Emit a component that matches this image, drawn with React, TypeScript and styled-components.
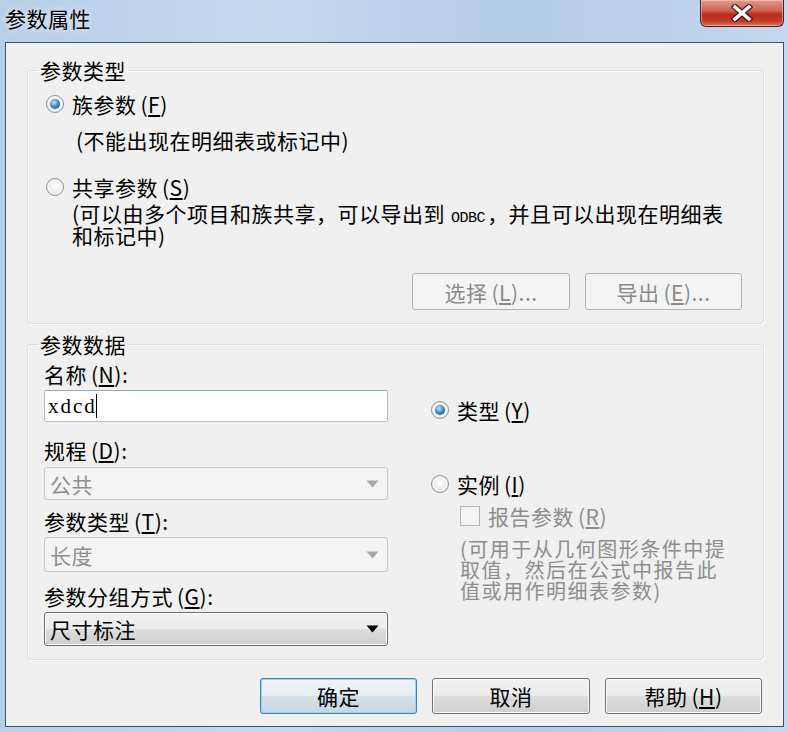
import React from "react";
import styled, { createGlobalStyle, css } from "styled-components";

const Global = createGlobalStyle`
  html, body { margin: 0; padding: 0; background: #b9d1ea; }
  body { font-family: "Noto Sans CJK SC", "Noto Sans", sans-serif; }
  * { box-sizing: border-box; }
`;

const Window = styled.div`
  width: 788px;
  height: 732px;
  display: flex;
  flex-direction: column;
  background: linear-gradient(90deg, #b8cfe8 0%, #c5d9ef 35%, #b2cbe6 65%, #c3d7ee 100%);
  font-family: "Noto Sans CJK SC", "Noto Sans", sans-serif;
  font-size: 21px;
  color: #000;
`;

const TitleBar = styled.div`
  height: 42px;
  flex: none;
  display: flex;
  justify-content: space-between;
  align-items: flex-start;
  padding-left: 5px;
`;

const TitleText = styled.div`
  font-size: 21px;
  line-height: 24px;
  margin-top: 6px;
  letter-spacing: 0.5px;
  text-shadow: 0 0 6px rgba(255, 255, 255, 0.9);
`;

const CloseButton = styled.div`
  width: 84px;
  height: 27px;
  margin-right: 4px;
  border: 1px solid #5a1a14;
  border-top: none;
  border-radius: 0 0 6px 6px;
  background: linear-gradient(180deg, #e39a8a 0%, #cf6552 40%, #b92d18 55%, #c13a24 80%, #d87259 100%);
  box-shadow: inset 0 0 0 1px rgba(255, 220, 210, 0.5);
  display: flex;
  align-items: center;
  justify-content: center;
`;

const Client = styled.div`
  flex: 1;
  margin: 0 4px 5px 5px;
  border: 1px solid #435164;
  background: #f0f0f0;
  padding: 15px 19px 0 21px;
  display: flex;
  flex-direction: column;
`;

const Group = styled.fieldset<{ $pad: string; $top?: number }>`
  margin: ${(p) => p.$top ?? 0}px 0 0 0;
  padding: ${(p) => p.$pad};
  border: 1px solid #d5dfe5;
  border-radius: 4px;
  box-shadow: inset 1px 1px 0 #ffffff, 1px 1px 0 #ffffff;
  min-width: 0;
`;

const Legend = styled.legend`
  font-size: 21px;
  line-height: 24px;
  padding: 0 2px;
  margin-left: -6px;
  letter-spacing: 0.5px;
`;

const RadioRow = styled.label<{ $top: number; $left?: number }>`
  display: flex;
  align-items: center;
  gap: 8px;
  margin-top: ${(p) => p.$top}px;
  margin-left: ${(p) => p.$left ?? 2}px;
  line-height: 24px;
  letter-spacing: 0.5px;
  white-space: nowrap;
`;

const RadioCircle = styled.span<{ $checked?: boolean }>`
  width: 18px;
  height: 18px;
  flex: none;
  border-radius: 50%;
  border: 1px solid #8e9193;
  background: radial-gradient(circle at 50% 40%, #ffffff 0%, #f0f0f0 45%, #cfd1d3 100%);
  box-shadow: inset 0 0 0 2px #f6f6f6;
  display: flex;
  align-items: center;
  justify-content: center;
  &::after {
    content: "";
    width: 10px;
    height: 10px;
    border-radius: 50%;
    background: radial-gradient(circle at 40% 35%, #c6ecff 0%, #4b9ad0 40%, #1d5585 80%, #133d63 100%);
    display: ${(p) => (p.$checked ? "block" : "none")};
  }
`;

const Note = styled.div<{ $top: number; $left: number; $lh?: number; $muted?: boolean; $size?: number; $ls?: number }>`
  margin-top: ${(p) => p.$top}px;
  margin-left: ${(p) => p.$left}px;
  line-height: ${(p) => p.$lh ?? 24}px;
  font-size: ${(p) => p.$size ?? 21}px;
  letter-spacing: ${(p) => p.$ls ?? 0.5}px;
  white-space: nowrap;
  color: ${(p) => (p.$muted ? "#8d8d8d" : "#000")};
`;

const Odbc = styled.span`
  font-family: "Liberation Mono", monospace;
  font-size: 15px;
  line-height: 0;
  letter-spacing: -0.5px;
  margin: 0 2px 0 6px;
`;

const Mn = styled.span`
  margin-left: 4px;
`;

const ButtonRow = styled.div<{ $top: number; $right?: number }>`
  display: flex;
  justify-content: flex-end;
  gap: 15px;
  margin-top: ${(p) => p.$top}px;
  margin-right: ${(p) => p.$right ?? 0}px;
`;

const Button = styled.div<{ $w: number; $h: number; $disabled?: boolean; $default?: boolean }>`
  width: ${(p) => p.$w}px;
  height: ${(p) => p.$h}px;
  border-radius: 3px;
  display: flex;
  align-items: center;
  justify-content: center;
  letter-spacing: 0.5px;
  white-space: nowrap;
  ${(p) =>
    p.$disabled
      ? css`
          border: 1px solid #adb2b5;
          background: #f4f4f4;
          color: #8a8a8a;
        `
      : css`
          border: 1px solid ${p.$default ? "#3c7fb1" : "#707070"};
          background: ${p.$default
            ? "linear-gradient(180deg, #eef4f8 0%, #e6eef4 49%, #d6e1ea 50%, #c9d6e1 100%)"
            : "linear-gradient(180deg, #f2f2f2 0%, #ebebeb 49%, #dddddd 50%, #cfcfcf 100%)"};
          box-shadow: inset 0 0 0 1px ${p.$default ? "#9ad6f6" : "#fbfbfb"};
          color: #000;
        `}
`;

const DataGrid = styled.div`
  display: grid;
  grid-template-columns: 344px 1fr;
  column-gap: 42px;
`;

const Column = styled.div`
  display: flex;
  flex-direction: column;
`;

const FieldLabel = styled.div<{ $top: number }>`
  margin-top: ${(p) => p.$top}px;
  line-height: 24px;
  letter-spacing: 0.5px;
  white-space: nowrap;
`;

const TextBox = styled.div`
  margin-top: 4px;
  height: 32px;
  border: 1px solid #a9bfd6;
  border-top-color: #8ea9c4;
  border-radius: 2px;
  background: #fff;
  display: flex;
  align-items: center;
  padding-left: 3px;
  font-family: "Liberation Serif", serif;
  font-size: 21px;
  letter-spacing: 2px;
`;

const Caret = styled.span`
  width: 1px;
  height: 24px;
  background: #000;
  margin-left: -1px;
`;

const Combo = styled.div<{ $disabled?: boolean; $h: number; $top: number }>`
  margin-top: ${(p) => p.$top}px;
  height: ${(p) => p.$h}px;
  border-radius: 3px;
  display: flex;
  align-items: center;
  justify-content: space-between;
  padding: 0 8px 0 5px;
  letter-spacing: 0.5px;
  ${(p) =>
    p.$disabled
      ? css`
          border: 1px solid #c8c8c8;
          background: #f4f4f4;
          color: #8f8f8f;
        `
      : css`
          border: 1px solid #707070;
          background: linear-gradient(180deg, #f2f2f2 0%, #ebebeb 49%, #dddddd 50%, #cfcfcf 100%);
          box-shadow: inset 0 0 0 1px #fbfbfb;
          color: #000;
        `}
`;

const CheckRow = styled.div`
  display: flex;
  align-items: center;
  gap: 8px;
  margin-top: 8px;
  margin-left: 30px;
  line-height: 24px;
  color: #8d8d8d;
  letter-spacing: 0.5px;
  white-space: nowrap;
`;

const CheckBox = styled.span`
  width: 20px;
  height: 20px;
  flex: none;
  border: 1px solid #b4b4b4;
  background: #f4f4f4;
`;

const Arrow = ({ disabled }: { disabled?: boolean }) => (
  <svg width="13" height="8" viewBox="0 0 13 8">
    <path d="M0.5 0.5 H12.5 L6.5 7.5 Z" fill={disabled ? "#a8a8a8" : "#000"} />
  </svg>
);

const CloseGlyph = () => (
  <svg width="22" height="18" viewBox="0 0 22 18">
    <path d="M4 3 L18 15 M18 3 L4 15" stroke="#4a1410" strokeWidth="6" strokeLinecap="square" />
    <path d="M4 3 L18 15 M18 3 L4 15" stroke="#ffffff" strokeWidth="3.6" strokeLinecap="square" />
  </svg>
);

const M = ({ k }: { k: string }) => (
  <Mn>
    (<u>{k}</u>)
  </Mn>
);

export default function App() {
  return (
    <>
      <Global />
      <Window>
        <TitleBar>
          <TitleText>参数属性</TitleText>
          <CloseButton>
            <CloseGlyph />
          </CloseButton>
        </TitleBar>
        <Client>
          <Group $pad="10px 21px 13px 16px">
            <Legend>参数类型</Legend>
            <RadioRow $top={0}>
              <RadioCircle $checked />
              <span>
                族参数<M k="F" />
              </span>
            </RadioRow>
            <Note $top={12} $left={32}>(不能出现在明细表或标记中)</Note>
            <RadioRow $top={23}>
              <RadioCircle />
              <span>
                共享参数<M k="S" />
              </span>
            </RadioRow>
            <Note $top={3} $left={28} $lh={22}>
              (可以由多个项目和族共享，可以导出到<Odbc>ODBC</Odbc>，并且可以出现在明细表
              <br />
              和标记中)
            </Note>
            <ButtonRow $top={27}>
              <Button $w={158} $h={37} $disabled>
                选择<M k="L" />...
              </Button>
              <Button $w={157} $h={37} $disabled>
                导出<M k="E" />...
              </Button>
            </ButtonRow>
          </Group>

          <Group $pad="6px 21px 13px 16px" $top={8}>
            <Legend>参数数据</Legend>
            <DataGrid>
              <Column>
                <FieldLabel $top={0}>
                  名称<M k="N" />:
                </FieldLabel>
                <TextBox>
                  xdcd
                  <Caret />
                </TextBox>
                <FieldLabel $top={16}>
                  规程<M k="D" />:
                </FieldLabel>
                <Combo $disabled $h={33} $top={5}>
                  <span>公共</span>
                  <Arrow disabled />
                </Combo>
                <FieldLabel $top={9}>
                  参数类型<M k="T" />:
                </FieldLabel>
                <Combo $disabled $h={35} $top={4}>
                  <span>长度</span>
                  <Arrow disabled />
                </Combo>
                <FieldLabel $top={12}>
                  参数分组方式<M k="G" />:
                </FieldLabel>
                <Combo $h={34} $top={4}>
                  <span>尺寸标注</span>
                  <Arrow />
                </Combo>
              </Column>
              <Column>
                <RadioRow $top={36} $left={1}>
                  <RadioCircle $checked />
                  <span>
                    类型<M k="Y" />
                  </span>
                </RadioRow>
                <RadioRow $top={50} $left={1}>
                  <RadioCircle />
                  <span>
                    实例<M k="I" />
                  </span>
                </RadioRow>
                <CheckRow>
                  <CheckBox />
                  <span>
                    报告参数<M k="R" />
                  </span>
                </CheckRow>
                <Note $top={10} $left={30} $lh={21} $size={20} $ls={1.5} $muted>
                  (可用于从几何图形条件中提
                  <br />
                  取值，然后在公式中报告此
                  <br />
                  值或用作明细表参数)
                </Note>
              </Column>
            </DataGrid>
          </Group>

          <ButtonRow $top={18} $right={2}>
            <Button $w={157} $h={36} $default>
              确定
            </Button>
            <Button $w={158} $h={36}>
              取消
            </Button>
            <Button $w={157} $h={36}>
              帮助<M k="H" />
            </Button>
          </ButtonRow>
        </Client>
      </Window>
    </>
  );
}
